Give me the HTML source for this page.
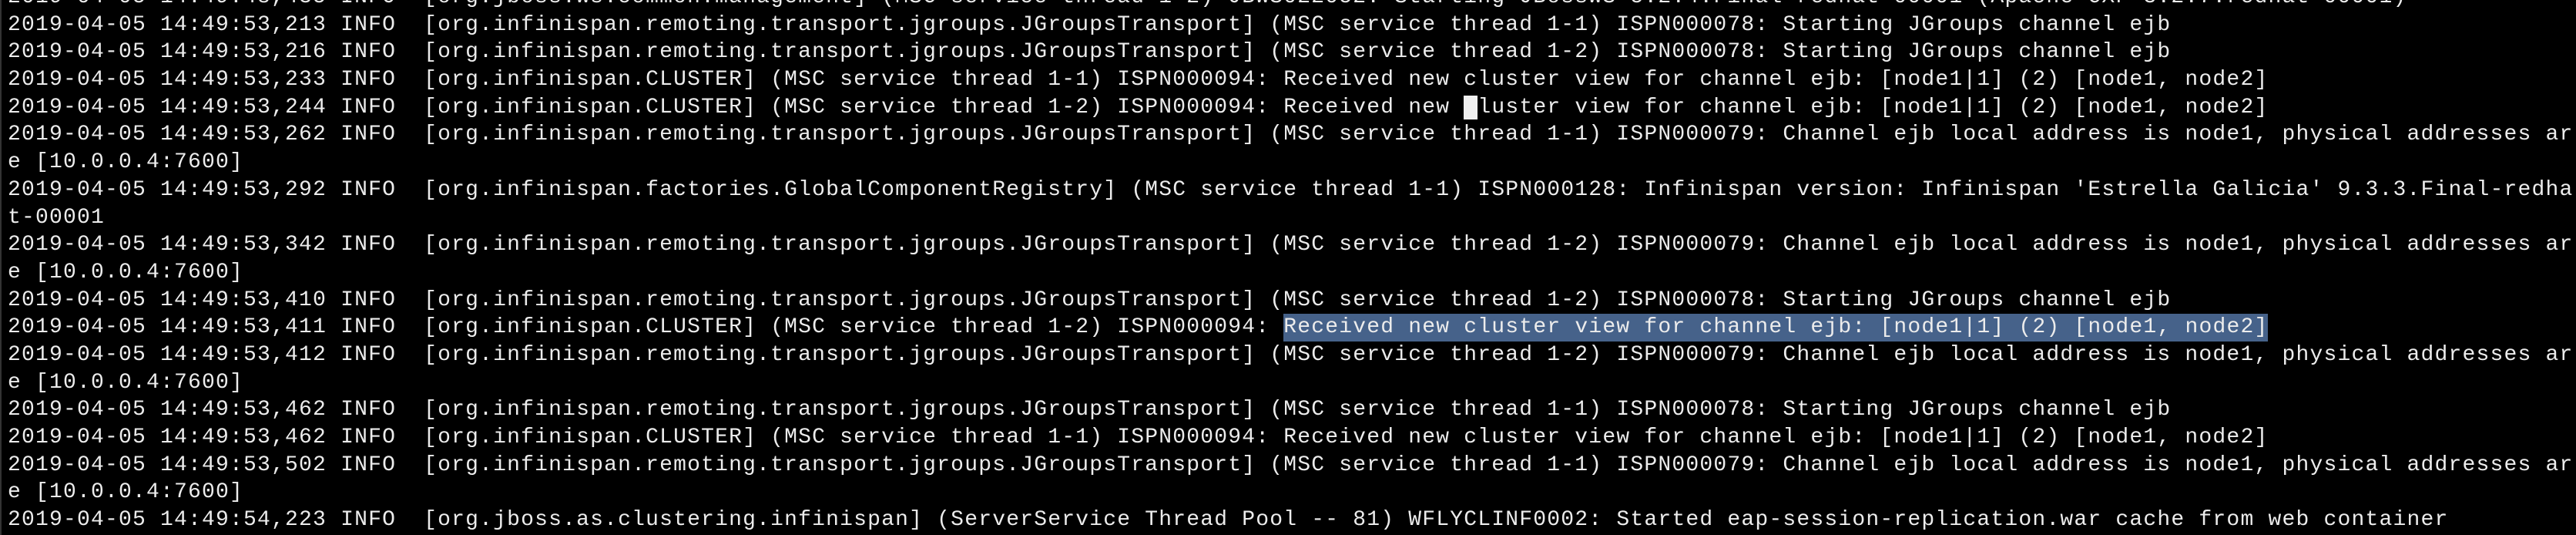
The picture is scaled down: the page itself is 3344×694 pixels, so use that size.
<!DOCTYPE html>
<html><head><meta charset="utf-8"><style>
html,body{margin:0;padding:0;background:#000;width:3344px;height:694px;overflow:hidden}
#t{position:absolute;left:10px;top:-21px;font-family:"Liberation Mono",monospace;font-size:28px;letter-spacing:1.2px;color:#ececec}
.l{height:35.7px;line-height:35.7px;white-space:pre}
.h{background:#46628a;display:inline-block;height:35.7px}
.c{background:#f0f0f0;color:#f0f0f0}
#edge{position:absolute;left:0;top:0;width:2px;height:694px;background:#333}
</style></head><body><div id="edge"></div><div id="t">
<div class="l">2019-04-05 14:49:48,435 INFO  [org.jboss.ws.common.management] (MSC service thread 1-2) JBWS022052: Starting JBossWS 5.2.4.Final-redhat-00001 (Apache CXF 3.2.7.redhat-00001)</div>
<div class="l">2019-04-05 14:49:53,213 INFO  [org.infinispan.remoting.transport.jgroups.JGroupsTransport] (MSC service thread 1-1) ISPN000078: Starting JGroups channel ejb</div>
<div class="l">2019-04-05 14:49:53,216 INFO  [org.infinispan.remoting.transport.jgroups.JGroupsTransport] (MSC service thread 1-2) ISPN000078: Starting JGroups channel ejb</div>
<div class="l">2019-04-05 14:49:53,233 INFO  [org.infinispan.CLUSTER] (MSC service thread 1-1) ISPN000094: Received new cluster view for channel ejb: [node1|1] (2) [node1, node2]</div>
<div class="l">2019-04-05 14:49:53,244 INFO  [org.infinispan.CLUSTER] (MSC service thread 1-2) ISPN000094: Received new <span class="c">c</span>luster view for channel ejb: [node1|1] (2) [node1, node2]</div>
<div class="l">2019-04-05 14:49:53,262 INFO  [org.infinispan.remoting.transport.jgroups.JGroupsTransport] (MSC service thread 1-1) ISPN000079: Channel ejb local address is node1, physical addresses ar</div>
<div class="l">e [10.0.0.4:7600]</div>
<div class="l">2019-04-05 14:49:53,292 INFO  [org.infinispan.factories.GlobalComponentRegistry] (MSC service thread 1-1) ISPN000128: Infinispan version: Infinispan 'Estrella Galicia' 9.3.3.Final-redha</div>
<div class="l">t-00001</div>
<div class="l">2019-04-05 14:49:53,342 INFO  [org.infinispan.remoting.transport.jgroups.JGroupsTransport] (MSC service thread 1-2) ISPN000079: Channel ejb local address is node1, physical addresses ar</div>
<div class="l">e [10.0.0.4:7600]</div>
<div class="l">2019-04-05 14:49:53,410 INFO  [org.infinispan.remoting.transport.jgroups.JGroupsTransport] (MSC service thread 1-2) ISPN000078: Starting JGroups channel ejb</div>
<div class="l">2019-04-05 14:49:53,411 INFO  [org.infinispan.CLUSTER] (MSC service thread 1-2) ISPN000094: <span class="h">Received new cluster view for channel ejb: [node1|1] (2) [node1, node2]</span></div>
<div class="l">2019-04-05 14:49:53,412 INFO  [org.infinispan.remoting.transport.jgroups.JGroupsTransport] (MSC service thread 1-2) ISPN000079: Channel ejb local address is node1, physical addresses ar</div>
<div class="l">e [10.0.0.4:7600]</div>
<div class="l">2019-04-05 14:49:53,462 INFO  [org.infinispan.remoting.transport.jgroups.JGroupsTransport] (MSC service thread 1-1) ISPN000078: Starting JGroups channel ejb</div>
<div class="l">2019-04-05 14:49:53,462 INFO  [org.infinispan.CLUSTER] (MSC service thread 1-1) ISPN000094: Received new cluster view for channel ejb: [node1|1] (2) [node1, node2]</div>
<div class="l">2019-04-05 14:49:53,502 INFO  [org.infinispan.remoting.transport.jgroups.JGroupsTransport] (MSC service thread 1-1) ISPN000079: Channel ejb local address is node1, physical addresses ar</div>
<div class="l">e [10.0.0.4:7600]</div>
<div class="l">2019-04-05 14:49:54,223 INFO  [org.jboss.as.clustering.infinispan] (ServerService Thread Pool -- 81) WFLYCLINF0002: Started eap-session-replication.war cache from web container</div>
</div></body></html>
